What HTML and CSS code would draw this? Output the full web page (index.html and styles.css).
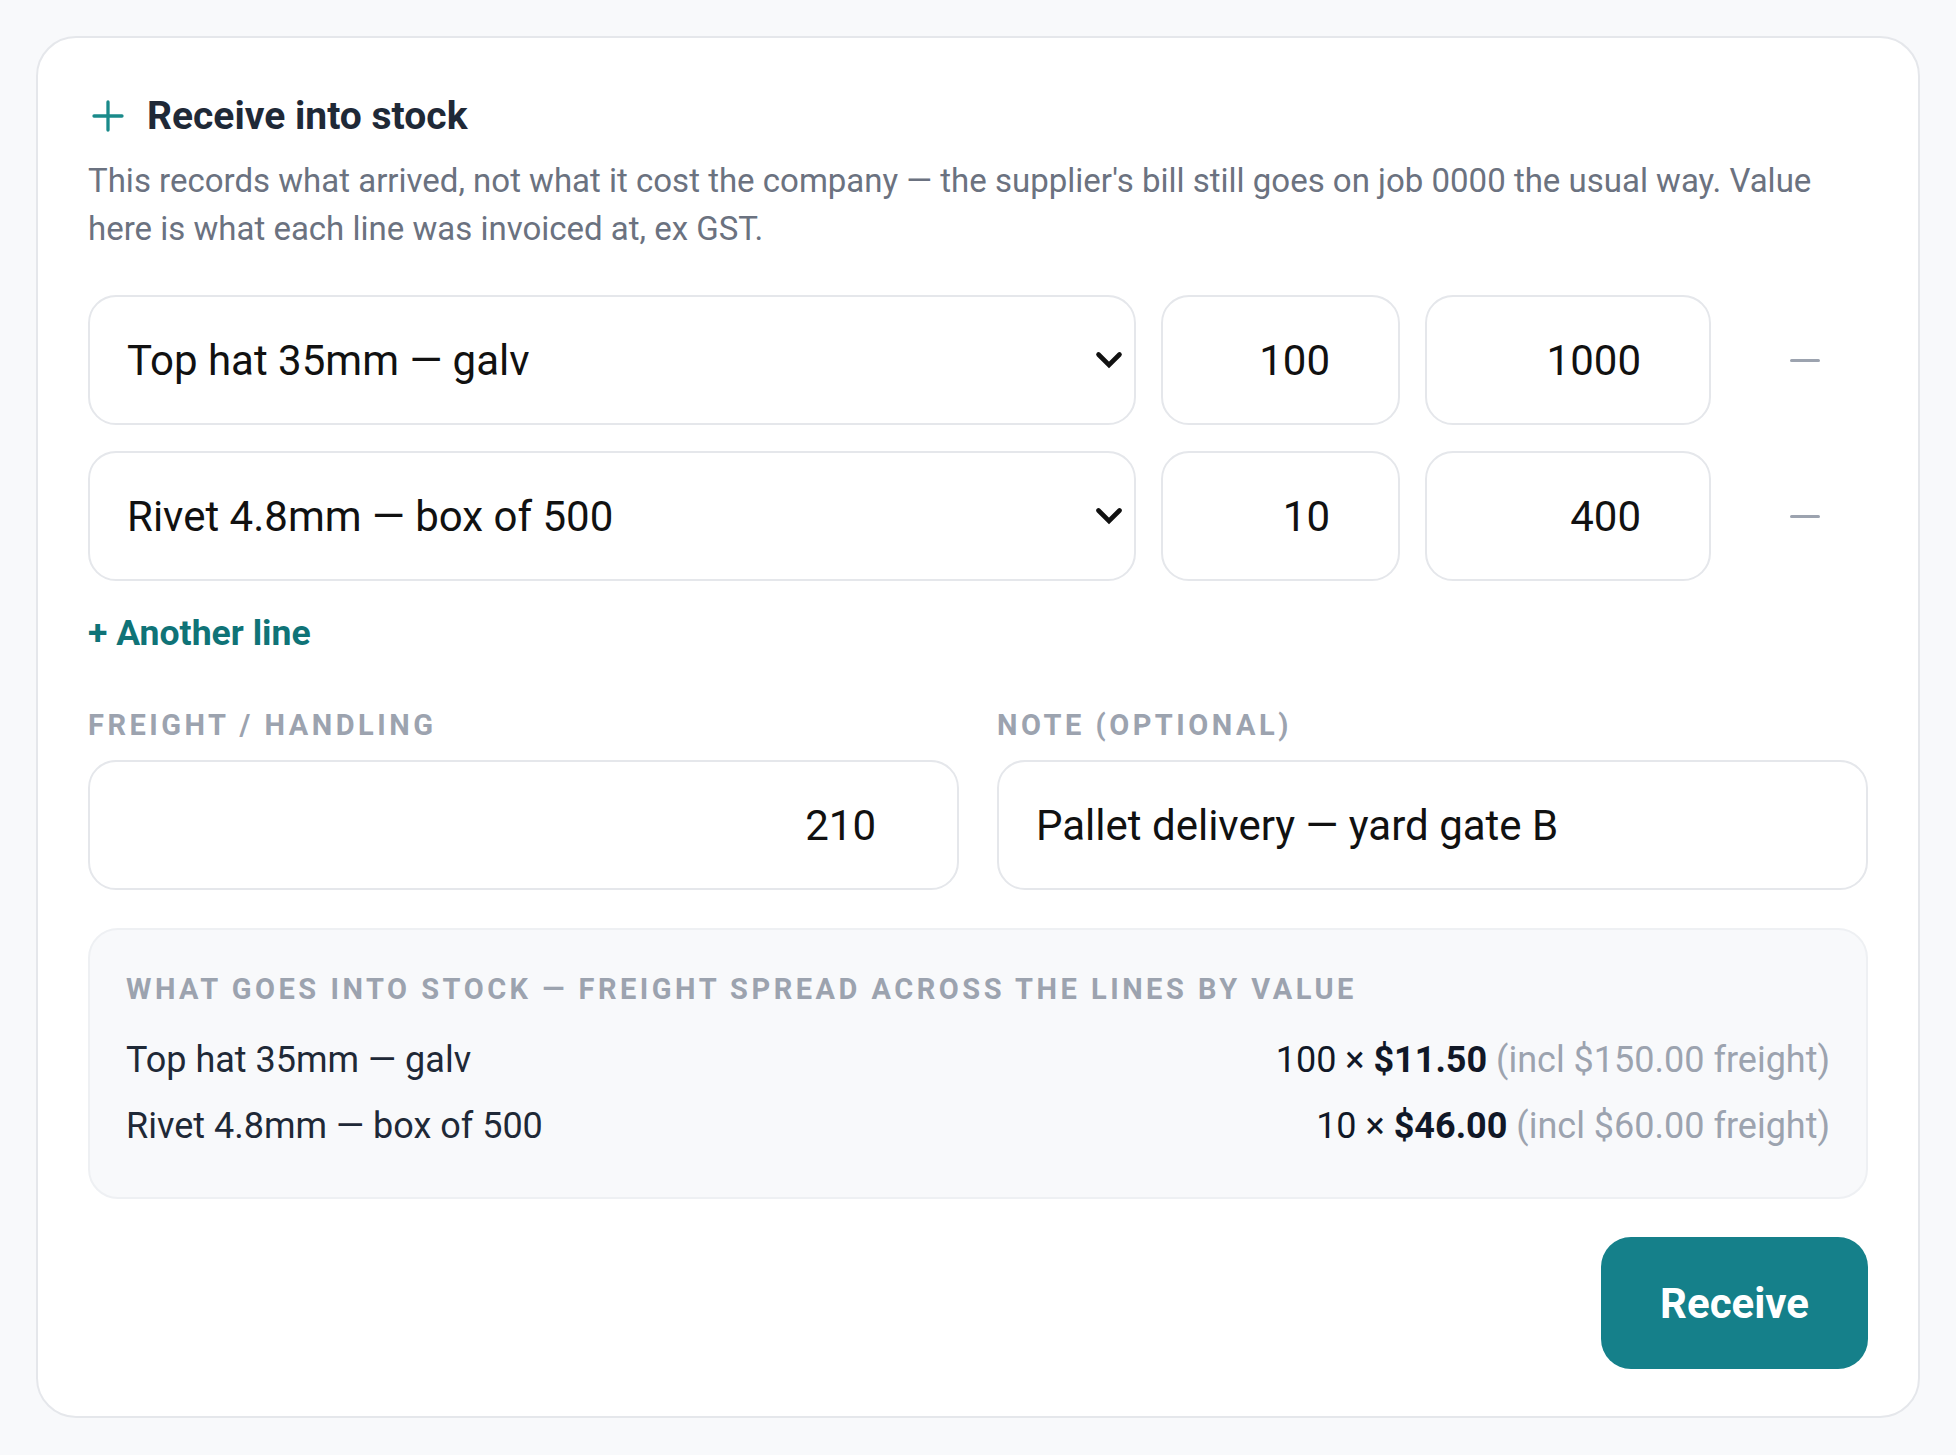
FILE: index.html
```html
<!DOCTYPE html>
<html lang="en">
<head>
    <meta charset="UTF-8">
    <meta name="viewport" content="width=device-width, initial-scale=1.0">
    <title>Receive into stock</title>
    <link rel="stylesheet" href="styles.css">
</head>
<body>
    <main class="page">
        <section class="card">
            <header class="card-head">
                <svg class="head-icon" width="40" height="40" viewBox="0 0 40 40" aria-hidden="true">
                    <path d="M6 20H34M20 6V34" fill="none" stroke="#1a8a8a" stroke-width="3.3" stroke-linecap="round"/>
                </svg>
                <h2>Receive into stock</h2>
            </header>
            <p class="intro">This records what arrived, not what it cost the company — the supplier's bill still goes on job 0000 the usual way. Value here is what each line was invoiced at, ex GST.</p>

            <div class="lines">
                <div class="line">
                    <div class="select-wrap">
                        <select class="field field-select">
                            <option selected>Top hat 35mm — galv</option>
                            <option>Rivet 4.8mm — box of 500</option>
                        </select>
                        <svg class="chevron" width="28" height="18" viewBox="0 0 28 18" aria-hidden="true">
                            <path d="M3.5 3.5L14 14L24.5 3.5" fill="none" stroke="#111" stroke-width="4.6" stroke-linecap="round" stroke-linejoin="miter"/>
                        </svg>
                    </div>
                    <input class="field field-num" type="text" inputmode="decimal" value="100" aria-label="Quantity">
                    <input class="field field-num" type="text" inputmode="decimal" value="1000" aria-label="Value">
                    <button class="remove" aria-label="Remove line"><span></span></button>
                </div>
                <div class="line">
                    <div class="select-wrap">
                        <select class="field field-select">
                            <option>Top hat 35mm — galv</option>
                            <option selected>Rivet 4.8mm — box of 500</option>
                        </select>
                        <svg class="chevron" width="28" height="18" viewBox="0 0 28 18" aria-hidden="true">
                            <path d="M3.5 3.5L14 14L24.5 3.5" fill="none" stroke="#111" stroke-width="4.6" stroke-linecap="round" stroke-linejoin="miter"/>
                        </svg>
                    </div>
                    <input class="field field-num" type="text" inputmode="decimal" value="10" aria-label="Quantity">
                    <input class="field field-num" type="text" inputmode="decimal" value="400" aria-label="Value">
                    <button class="remove" aria-label="Remove line"><span></span></button>
                </div>
            </div>

            <button class="add-line">+ Another line</button>

            <div class="extras">
                <label class="extra">
                    <span class="label">Freight / handling</span>
                    <input class="field field-freight" type="text" inputmode="decimal" value="210">
                </label>
                <label class="extra">
                    <span class="label">Note (optional)</span>
                    <input class="field field-note" type="text" value="Pallet delivery — yard gate B">
                </label>
            </div>

            <div class="summary">
                <div class="summary-title">What goes into stock — freight spread across the lines by value</div>
                <div class="summary-row">
                    <span class="summary-name">Top hat 35mm — galv</span>
                    <span class="summary-calc">100 × <b>$11.50</b> <span class="muted">(incl $150.00 freight)</span></span>
                </div>
                <div class="summary-row">
                    <span class="summary-name">Rivet 4.8mm — box of 500</span>
                    <span class="summary-calc">10 × <b>$46.00</b> <span class="muted">(incl $60.00 freight)</span></span>
                </div>
            </div>

            <div class="actions">
                <button class="btn-primary">Receive</button>
            </div>
        </section>
    </main>
</body>
</html>
```

FILE: styles.css
```css
/* General styles */
* {
    box-sizing: border-box;
}

body {
    font-family: Roboto, 'Liberation Sans', Arial, sans-serif;
    background-color: #f8f9fb;
    color: #111827;
    margin: 0;
    padding: 0;
}

.page {
    padding: 36px;
}

/* Card */
.card {
    background-color: #fff;
    border: 2px solid #e5e7eb;
    border-radius: 40px;
    padding: 50px 50px 47px;
}

.card-head {
    display: flex;
    align-items: center;
    gap: 19px;
    height: 56px;
}

.head-icon {
    flex: none;
    display: block;
}

.card-head h2 {
    margin: 0;
    font-size: 39px;
    font-weight: 700;
    color: #1f2937;
    line-height: 56px;
}

.intro {
    margin: 13px 0 0;
    font-size: 33px;
    line-height: 48px;
    color: #6b7280;
}

/* Form fields */
.field {
    display: block;
    width: 100%;
    height: 130px;
    border: 2px solid #e5e7eb;
    border-radius: 28px;
    background-color: #fff;
    font-family: inherit;
    font-size: 42px;
    color: #111;
    padding: 0 37px;
    outline: none;
}

.lines {
    margin-top: 42px;
    display: flex;
    flex-direction: column;
    gap: 26px;
}

.line {
    display: grid;
    grid-template-columns: 1fr 239px 286px 132px;
    gap: 25px;
    align-items: center;
}

.select-wrap {
    position: relative;
}

.field-select {
    appearance: none;
    -webkit-appearance: none;
    padding-right: 80px;
}

.chevron {
    position: absolute;
    right: 13px;
    top: 50%;
    margin-top: -9px;
    pointer-events: none;
}

.field-num {
    text-align: right;
    padding-right: 68px;
}

.remove {
    background: none;
    border: none;
    height: 60px;
    display: flex;
    align-items: center;
    justify-content: center;
    cursor: pointer;
    padding: 0 0 0 6px;
}

.remove span {
    display: block;
    width: 30px;
    height: 3px;
    border-radius: 2px;
    background-color: #9ca3af;
}

.add-line {
    display: block;
    margin-top: 32px;
    padding: 0;
    border: none;
    background: none;
    font-family: inherit;
    font-size: 35.6px;
    font-weight: 700;
    line-height: 41px;
    color: #0f7377;
    cursor: pointer;
}

/* Freight and note */
.extras {
    margin-top: 54px;
    display: grid;
    grid-template-columns: 1fr 1fr;
    gap: 38px;
}

.extra {
    display: block;
}

.label {
    display: block;
    font-size: 29px;
    font-weight: 700;
    line-height: 34px;
    letter-spacing: 3.5px;
    text-transform: uppercase;
    color: #9ca3af;
    margin-bottom: 18px;
}

.field-freight {
    text-align: right;
    padding-right: 81px;
}

/* Summary */
.summary {
    margin-top: 38px;
    background-color: #f8f9fb;
    border: 2px solid #eef0f3;
    border-radius: 30px;
    padding: 40px 36px 44px;
}

.summary-title {
    font-size: 29px;
    font-weight: 700;
    line-height: 38px;
    letter-spacing: 3.5px;
    text-transform: uppercase;
    color: #9ca3af;
    margin-bottom: 25px;
}

.summary-row {
    display: flex;
    justify-content: space-between;
    font-size: 36px;
    line-height: 54px;
}

.summary-row + .summary-row {
    margin-top: 12px;
}

.summary-name {
    color: #1f2937;
}

.summary-calc {
    color: #111827;
}

.summary-calc b {
    font-weight: 700;
}

.muted {
    color: #9ca3af;
}

/* Actions */
.actions {
    margin-top: 38px;
    display: flex;
    justify-content: flex-end;
}

.btn-primary {
    height: 132px;
    padding: 0 59px;
    border: none;
    border-radius: 30px;
    background-color: #15808a;
    color: #fff;
    font-family: inherit;
    font-size: 42px;
    font-weight: 700;
    cursor: pointer;
}
```
